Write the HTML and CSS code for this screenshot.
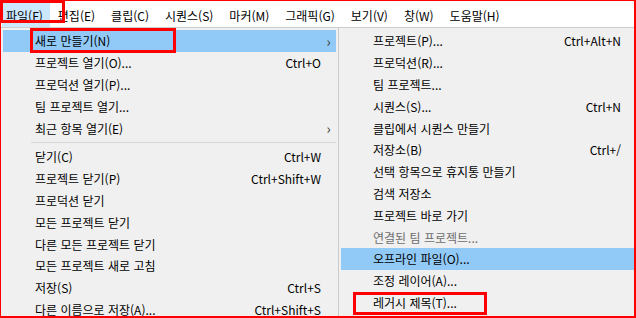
FILE: index.html
```html
<!DOCTYPE html>
<html lang="ko">
<head>
<meta charset="utf-8">
<link rel="stylesheet" href="styles.css">
</head>
<body>
<div class="screen">
  <div class="menubar">
    <span class="mb-item active">파일(F)</span>
    <span class="mb-item">편집(E)</span>
    <span class="mb-item">클립(C)</span>
    <span class="mb-item">시퀀스(S)</span>
    <span class="mb-item">마커(M)</span>
    <span class="mb-item">그래픽(G)</span>
    <span class="mb-item">보기(V)</span>
    <span class="mb-item">창(W)</span>
    <span class="mb-item">도움말(H)</span>
  </div>
  <div class="menus">
    <div class="menu main">
      <div class="row hl"><span class="label">새로 만들기(N)</span><span class="key"></span><span class="arrow">›</span></div>
      <div class="row"><span class="label">프로젝트 열기(O)...</span><span class="key">Ctrl+O</span><span class="arrow"></span></div>
      <div class="row"><span class="label">프로덕션 열기(P)...</span><span class="key"></span><span class="arrow"></span></div>
      <div class="row"><span class="label">팀 프로젝트 열기...</span><span class="key"></span><span class="arrow"></span></div>
      <div class="row"><span class="label">최근 항목 열기(E)</span><span class="key"></span><span class="arrow">›</span></div>
      <div class="sep"></div>
      <div class="row"><span class="label">닫기(C)</span><span class="key">Ctrl+W</span><span class="arrow"></span></div>
      <div class="row"><span class="label">프로젝트 닫기(P)</span><span class="key">Ctrl+Shift+W</span><span class="arrow"></span></div>
      <div class="row"><span class="label">프로덕션 닫기</span><span class="key"></span><span class="arrow"></span></div>
      <div class="row"><span class="label">모든 프로젝트 닫기</span><span class="key"></span><span class="arrow"></span></div>
      <div class="row"><span class="label">다른 모든 프로젝트 닫기</span><span class="key"></span><span class="arrow"></span></div>
      <div class="row"><span class="label">모든 프로젝트 새로 고침</span><span class="key"></span><span class="arrow"></span></div>
      <div class="row"><span class="label">저장(S)</span><span class="key">Ctrl+S</span><span class="arrow"></span></div>
      <div class="row"><span class="label">다른 이름으로 저장(A)...</span><span class="key">Ctrl+Shift+S</span><span class="arrow"></span></div>
    </div>
    <div class="menu sub">
      <div class="row"><span class="label">프로젝트(P)...</span><span class="key">Ctrl+Alt+N</span></div>
      <div class="row"><span class="label">프로덕션(R)...</span><span class="key"></span></div>
      <div class="row"><span class="label">팀 프로젝트...</span><span class="key"></span></div>
      <div class="row"><span class="label">시퀀스(S)...</span><span class="key">Ctrl+N</span></div>
      <div class="row"><span class="label">클립에서 시퀀스 만들기</span><span class="key"></span></div>
      <div class="row"><span class="label">저장소(B)</span><span class="key">Ctrl+/</span></div>
      <div class="row"><span class="label">선택 항목으로 휴지통 만들기</span><span class="key"></span></div>
      <div class="row"><span class="label">검색 저장소</span><span class="key"></span></div>
      <div class="row"><span class="label">프로젝트 바로 가기</span><span class="key"></span></div>
      <div class="row disabled"><span class="label">연결된 팀 프로젝트...</span><span class="key"></span></div>
      <div class="row hl"><span class="label">오프라인 파일(O)...</span><span class="key"></span></div>
      <div class="row"><span class="label">조정 레이어(A)...</span><span class="key"></span></div>
      <div class="row"><span class="label">레거시 제목(T)...</span><span class="key"></span></div>
    </div>
  </div>
  <div class="mark mark-file"></div>
  <div class="mark mark-new"></div>
  <div class="mark mark-legacy"></div>
</div>
</body>
</html>
```

FILE: styles.css
```css
* { box-sizing: border-box; }
html, body { margin: 0; padding: 0; }
body {
  width: 636px;
  height: 318px;
  overflow: hidden;
  font-family: "Segoe UI", "Noto Sans CJK KR", "Noto Sans", sans-serif;
  font-size: 12px;
  color: #000;
  background: #fff;
}
.screen {
  position: relative;
  width: 636px;
  height: 318px;
  overflow: hidden;
  border-top: 1px solid #f00;
  border-left: 1px solid #f00;
  border-right: 2px solid #f00;
  border-bottom: 2px solid #f00;
  background: #fff;
}
.menubar {
  display: flex;
  height: 26px;
  padding: 2px 0 0 1px;
  background: #fff;
}
.mb-item {
  display: flex;
  align-items: center;
  padding: 0 8px 0 8px;
  height: 24px;
  white-space: nowrap;
}
.mb-item.active { background: #cce8ff; padding-left: 4px; padding-right: 7px; }
.menus {
  display: flex;
  align-items: flex-start;
}
.menu {
  background: #f0f0f0;
  border-top: 1px solid #cccccc;
  padding: 2px 2px 0 2px;
  height: 300px;
}
.main {
  width: 337px;
  flex: none;
}
.sub {
  flex: 1;
  border-left: 1px solid #cccccc;
  padding-left: 2px;
  padding-right: 0;
}
.row {
  display: flex;
  align-items: center;
  height: 21.8px;
  padding-left: 32px;
  white-space: nowrap;
}
.row.hl { background: #91c9f7; }
.row.disabled { color: #6d6d6d; }
.label { flex: 1; }
.key { text-align: right; }
.main .arrow {
  width: 15px;
  text-align: center;
  font-size: 14px;
  color: #333;
}
.sub .key { padding-right: 13px; }
.sep {
  height: 7px;
  margin-left: 28px;
  display: flex;
  align-items: center;
}
.sep::before {
  content: "";
  display: block;
  width: 100%;
  height: 1px;
  background: #d7d7d7;
}
.mark {
  position: absolute;
  border: 3px solid #f00;
}
.mark-file { left: -1px; top: -1px; width: 65px; height: 23px; }
.mark-new { left: 29px; top: 27px; width: 146px; height: 25px; }
.mark-legacy { left: 352px; top: 291px; width: 134px; height: 23px; }
```
